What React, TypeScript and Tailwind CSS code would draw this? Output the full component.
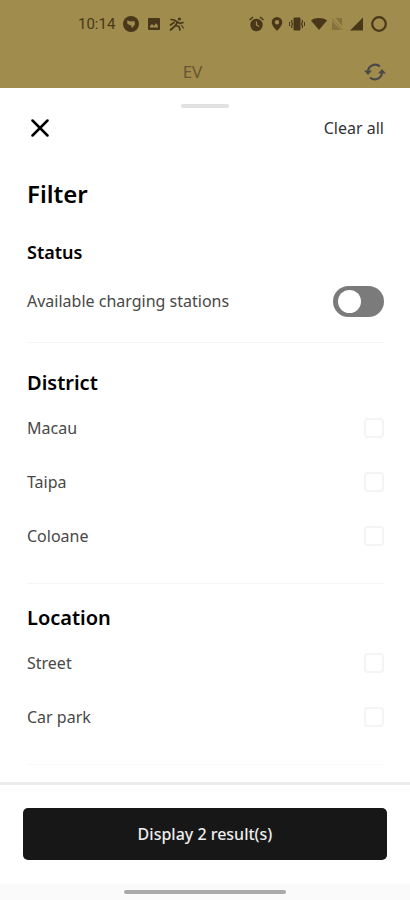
import { useState } from "react";

function StatusBar() {
  return (
    <div className="flex h-12 items-center justify-between pr-[23px] pl-[78px] text-[#483819]">
      <div className="flex items-center">
        <span className="w-[45px] font-['Roboto'] text-[15px] leading-5">10:14</span>
        <svg className="h-4 w-4" viewBox="0 0 16 16" fill="none">
          <circle cx="8" cy="8" r="8" fill="currentColor" />
          <path d="M4 4.5 8 5.500 11.500 5 12 8.500 9 12 8 9.5 4.5 8Z" fill="#a08c4d" />
        </svg>
        <svg className="ml-2 h-3.5 w-3.5" viewBox="0 0 14 14" fill="none">
          <rect x="1" y="1" width="12" height="12" rx="1" fill="currentColor" />
          <path d="M3 10.5V9l2-2 2 2 2-3 2 3v1.5Z" fill="#a08c4d" />
        </svg>
        <svg className="ml-2 h-4 w-4" viewBox="0 0 16 16" fill="none" stroke="currentColor" strokeLinecap="round" strokeLinejoin="round">
          <path d="M2 3.500 5 4l3.500 2 2.500 1.500 3-1M8.500 6 6.500 9.500 1.500 14M6.500 9.500 10 10.500l1 3.500M1.500 9l3.500-2.500" strokeWidth="1.700" />
          <path d="M12.500 9.500 14.500 12" strokeWidth="1.200" />
          <circle cx="10.500" cy="3" r="1.600" fill="currentColor" stroke="none" />
        </svg>
      </div>
      <div className="flex items-center gap-1">
        <svg className="h-4 w-4" viewBox="0 0 16 16" fill="none" stroke="currentColor">
          <circle cx="7.500" cy="9" r="6.200" fill="currentColor" stroke="none" />
          <path d="M.5 4 4 1M14.500 4 11 1" strokeWidth="1.500" />
          <path d="M7.500 5.500V9l2.500 1.500" stroke="#a08c4d" strokeWidth="1.200" />
        </svg>
        <svg className="h-4 w-4" viewBox="0 0 16 16" fill="currentColor">
          <path fillRule="evenodd" d="M8 1a5.300 5.300 0 0 0-5.300 5.300c0 3.700 5.300 8.700 5.300 8.700s5.300-5 5.300-8.700A5.300 5.300 0 0 0 8 1Zm0 3a2.200 2.200 0 1 1 0 4.400A2.200 2.200 0 0 1 8 4Z" />
        </svg>
        <svg className="h-4 w-4" viewBox="0 0 16 16" fill="none" stroke="currentColor">
          <rect x="4.500" y="1.500" width="7" height="13" rx="1" fill="currentColor" stroke="none" />
          <path d="M3 4 2.500 6 3.500 8 2.500 10 3 12M13 4l.5 2-1 2 1 2-.5 2" strokeWidth="1.200" />
          <path d="M.5 6v4M15.500 6v4" strokeWidth="1" />
        </svg>
        <svg className="ml-0.5 h-4 w-4" viewBox="0 0 16 16" fill="currentColor">
          <path d="M0 4.500C4.500 1.300 11.500 1.300 16 4.500L8 14Z" />
        </svg>
        <svg className="h-4 w-3 text-[#86733a]" viewBox="0 0 12 16" fill="currentColor">
          <path d="M4.500 2H11v8ZM1 5 10 14H1Z" />
          <path d="M.5 2 11.500 14" stroke="currentColor" />
        </svg>
        <svg className="h-4 w-4" viewBox="0 0 16 16" fill="currentColor">
          <path d="M16 1.500V14.500H3Z" />
        </svg>
        <svg className="ml-1 h-4 w-4" viewBox="0 0 16 16" fill="none">
          <circle cx="8" cy="8" r="6.800" stroke="currentColor" strokeWidth="2.200" />
        </svg>
      </div>
    </div>
  );
}

function CheckRow({ label }: { label: string }) {
  return (
    <label className="flex h-[54px] items-center justify-between text-[16px] leading-6 text-[#484848]">
      {label}
      <input
        type="checkbox"
        className="h-5 w-5 appearance-none rounded-[4px] border-2 border-[#f4f4f4] bg-white checked:border-[#171717] checked:bg-[#171717]"
      />
    </label>
  );
}

function FilterGroup({ title, options }: { title: string; options: string[] }) {
  return (
    <fieldset className="pb-5">
      <legend className="mb-1 text-[20px] leading-7 font-semibold text-black">{title}</legend>
      {options.map((option) => (
        <CheckRow key={option} label={option} />
      ))}
    </fieldset>
  );
}

export default function App() {
  const [available, setAvailable] = useState(false);

  return (
    <div className="flex min-h-screen flex-col bg-[#a08c4d] font-['Noto_Sans',sans-serif]">
      <header>
        <StatusBar />
        <div className="grid h-10 grid-cols-3 items-center pt-2 pr-6 pl-[27px] text-[#6b5533]">
          <span className="col-start-2 pl-9 text-[17px] leading-6">EV</span>
          <button type="button" aria-label="Refresh" className="justify-self-end text-[#4b4a46]">
            <svg className="h-[22px] w-[22px]" viewBox="0 0 22 22" fill="none" stroke="currentColor" strokeWidth="2.200">
              <path d="M4 10.500A7.200 7.200 0 0 1 16 5.500M18 11.500A7.200 7.200 0 0 1 6 16.500" />
              <path d="M0 9.500h8L4 14ZM22 12.500h-8L18 8Z" fill="currentColor" stroke="none" />
            </svg>
          </button>
        </div>
      </header>

      <main className="flex flex-1 flex-col bg-white pt-4">
        <div className="h-1 w-12 self-center rounded-full bg-[#e1e1e1]" />
        <div className="flex flex-1 flex-col pr-[26px] pl-[27px]">
          <div className="flex h-10 items-center justify-between">
            <button type="button" aria-label="Close" className="p-1 text-black">
              <svg className="h-[18px] w-[18px]" viewBox="0 0 18 18" fill="none" stroke="currentColor" strokeWidth="2.500" strokeLinecap="round">
                <path d="M1.500 1.500l15 15M16.500 1.500l-15 15" />
              </svg>
            </button>
            <button type="button" className="text-[16px] leading-6 text-[#333]">
              Clear all
            </button>
          </div>

          <h1 className="mt-7 text-[24px] leading-9 font-semibold text-black">Filter</h1>

          <section className="mt-[26px] border-b border-[#f5f5f5] pb-3.5">
            <h2 className="mb-2 text-[18px] leading-7 font-semibold text-black">Status</h2>
            <label className="flex h-[54px] items-center justify-between text-[16px] leading-6 text-[#484848]">
              Available charging stations
              <input
                type="checkbox"
                role="switch"
                checked={available}
                onChange={(event) => setAvailable(event.target.checked)}
                className="flex h-[31px] w-[51px] appearance-none items-center rounded-full bg-[#7b7b7b] px-[5px] before:h-[23px] before:w-[23px] before:rounded-full before:bg-white checked:justify-end checked:bg-[#171717]"
              />
            </label>
          </section>

          <div className="border-b border-[#f5f5f5] pt-[26px]">
            <FilterGroup title="District" options={["Macau", "Taipa", "Coloane"]} />
          </div>
          <div className="border-b border-[#f9f9f9] pt-5">
            <FilterGroup title="Location" options={["Street", "Car park"]} />
          </div>
        </div>
      </main>

      <footer className="bg-white">
        <div className="border-t-3 border-[#ececec] px-[23px] pt-[23px] pb-6">
          <button type="button" className="h-[52px] w-full rounded-[5px] bg-[#171717] text-[16px] leading-6 font-medium text-[#ededed]">
            Display 2 result(s)
          </button>
        </div>
        <div className="flex h-4 justify-center bg-[#fafafa] pt-1.5">
          <div className="h-1 w-[162px] rounded-full bg-[#a9a9a9]" />
        </div>
      </footer>
    </div>
  );
}
